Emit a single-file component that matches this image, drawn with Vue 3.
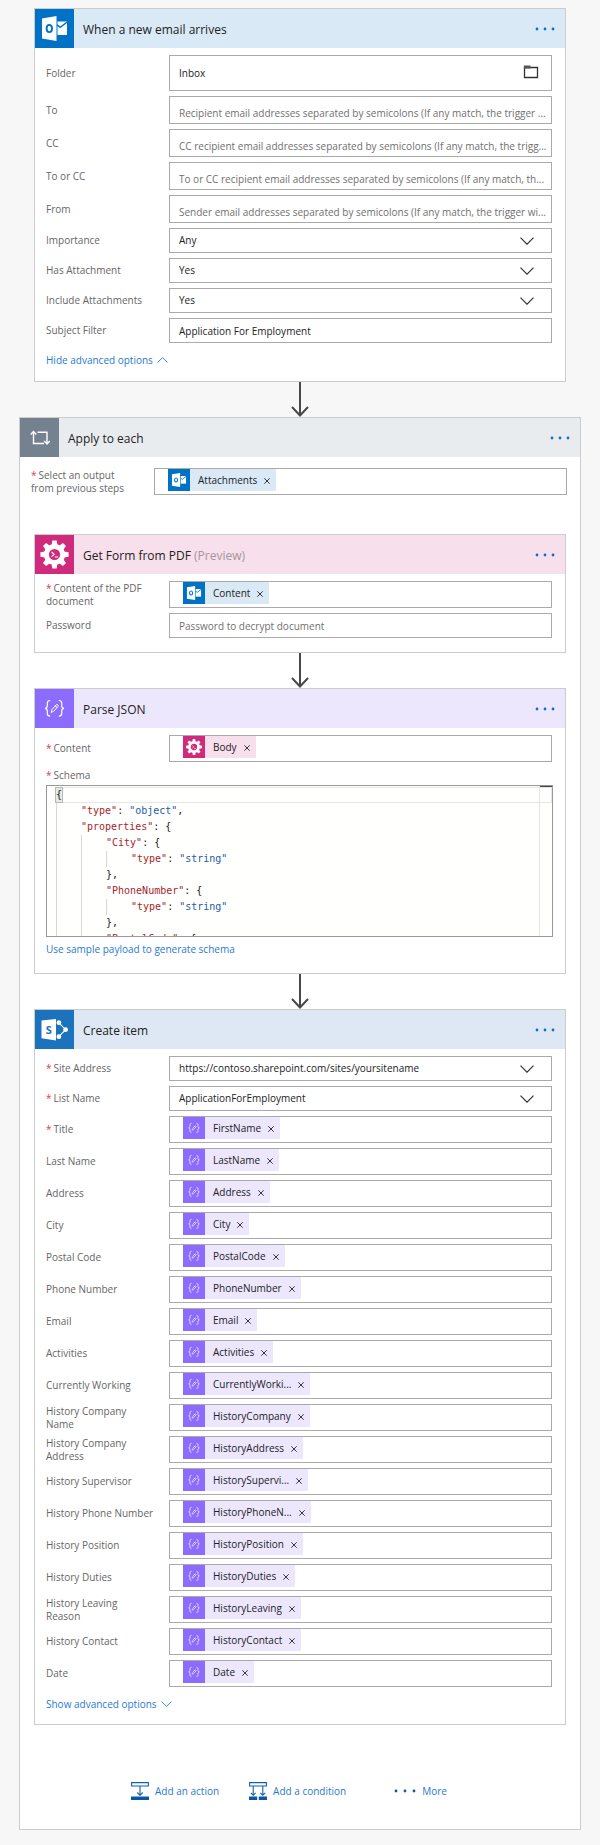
<script setup>
import { h } from 'vue'

const emailFilters = [
  { id: 'to', label: 'To', hint: 'Recipient email addresses separated by semicolons (If any match, the trigger ...' },
  { id: 'cc', label: 'CC', hint: 'CC recipient email addresses separated by semicolons (If any match, the trigg...' },
  { id: 'to-or-cc', label: 'To or CC', hint: 'To or CC recipient email addresses separated by semicolons (If any match, th...' },
  { id: 'from', label: 'From', hint: 'Sender email addresses separated by semicolons (If any match, the trigger wi...' },
]

const emailChoices = [
  { id: 'importance', label: 'Importance', value: 'Any' },
  { id: 'has-attachment', label: 'Has Attachment', value: 'Yes' },
  { id: 'include-attachments', label: 'Include Attachments', value: 'Yes' },
]

const listChoices = [
  { id: 'site', label: 'Site Address', value: 'https://contoso.sharepoint.com/sites/yoursitename' },
  { id: 'list', label: 'List Name', value: 'ApplicationForEmployment' },
]

const itemFields = [
  { label: 'Title', token: 'FirstName', required: true },
  { label: 'Last Name', token: 'LastName' },
  { label: 'Address', token: 'Address' },
  { label: 'City', token: 'City' },
  { label: 'Postal Code', token: 'PostalCode' },
  { label: 'Phone Number', token: 'PhoneNumber' },
  { label: 'Email', token: 'Email' },
  { label: 'Activities', token: 'Activities' },
  { label: 'Currently Working', token: 'CurrentlyWorki...' },
  { label: 'History Company\nName', token: 'HistoryCompany' },
  { label: 'History Company\nAddress', token: 'HistoryAddress' },
  { label: 'History Supervisor', token: 'HistorySupervi...' },
  { label: 'History Phone Number', token: 'HistoryPhoneN...' },
  { label: 'History Position', token: 'HistoryPosition' },
  { label: 'History Duties', token: 'HistoryDuties' },
  { label: 'History Leaving\nReason', token: 'HistoryLeaving' },
  { label: 'History Contact', token: 'HistoryContact' },
  { label: 'Date', token: 'Date' },
]

const schema = [
  { depth: 0, brace: '{' },
  { depth: 1, name: '"type"', text: '"object"', end: ',' },
  { depth: 1, name: '"properties"', end: '{' },
  { depth: 2, name: '"City"', end: '{' },
  { depth: 3, name: '"type"', text: '"string"' },
  { depth: 2, end: '},' },
  { depth: 2, name: '"PhoneNumber"', end: '{' },
  { depth: 3, name: '"type"', text: '"string"' },
  { depth: 2, end: '},' },
  { depth: 2, name: '"PostalCode"', end: '{' },
]

const teeth = [0, 45, 90, 135, 180, 225, 270, 315]

const art = {
  outlook: () => [
    h('path', { d: 'M7 9.5 21.5 7v25L7 29.5z', fill: '#fff' }),
    h('ellipse', { cx: 14.3, cy: 19.5, rx: 2.7, ry: 3.6, fill: 'none', stroke: '#0072c6', 'stroke-width': 1.9 }),
    h('path', { d: 'M22.5 12.5H32V26h-9.5z', fill: '#fff' }),
    h('path', { d: 'M22 15.8l3.2 2.6L32.3 13', fill: 'none', stroke: '#0072c6', 'stroke-width': 1.5 }),
  ],
  gear: () => [
    ...teeth.map((a) => h('path', { d: 'M16.6 10l.7-4.6h4.4l.7 4.6z', fill: '#fff', transform: `rotate(${a} 19.5 19.5)` })),
    h('circle', { cx: 19.5, cy: 19.5, r: 10.6, fill: '#fff' }),
    h('circle', { cx: 19.5, cy: 19.5, r: 5.6, fill: '#cf2a7b' }),
    h('path', { d: 'M16.6 17l2.6 2.3-2.6 2.3M19.8 22h3.4', fill: 'none', stroke: '#fff', 'stroke-width': 1.1 }),
  ],
  json: () => [
    h('path', {
      d: 'M15.2 11.5c-2.4 0-2.9.9-2.9 2.6v2.6c0 1.5-.6 2.4-2.3 2.6 1.7.2 2.3 1.1 2.3 2.6v2.6c0 1.7.5 2.6 2.9 2.6M23.8 11.5c2.4 0 2.9.9 2.9 2.6v2.6c0 1.5.6 2.4 2.3 2.6-1.7.2-2.3 1.1-2.3 2.6v2.6c0 1.7-.5 2.6-2.9 2.6',
      fill: 'none', stroke: '#fff', 'stroke-width': 1.2,
    }),
    h('path', { d: 'M16.2 23.4l.7-2.8 4.3-4.8c.9-.9 2.6.5 1.8 1.6l-4.3 4.9zM20.2 17l1.9 1.6', fill: 'none', stroke: '#fff', 'stroke-width': 1 }),
  ],
  sharepoint: () => [
    h('path', { d: 'M23.7 12.7 30.6 19.7 23.7 26.7', fill: 'none', stroke: '#fff', 'stroke-width': 1.1 }),
    h('circle', { cx: 23.9, cy: 12.7, r: 2.4, fill: '#fff' }),
    h('circle', { cx: 30.6, cy: 19.7, r: 2.4, fill: '#fff' }),
    h('circle', { cx: 23.9, cy: 26.7, r: 2.4, fill: '#fff' }),
    h('path', { d: 'M6.5 10.6 21 9v21.500L6.5 28.300z', fill: '#fff' }),
    h('text', { x: 13.8, y: 23.7, 'text-anchor': 'middle', 'font-size': 11, 'font-weight': 700, fill: '#1b72bd' }, 'S'),
  ],
  loop: () => [
    h('path', { d: 'M13.500 14v11.500h10.500M17.500 14.300H27V25', fill: 'none', stroke: '#fff', 'stroke-width': 1.4 }),
    h('path', { d: 'M10.700 16.500l2.800-3 2.800 3M24.200 23l2.800 3 2.800-3', fill: 'none', stroke: '#fff', 'stroke-width': 1.4 }),
  ],
}

const BrandIcon = (props) =>
  h('svg', { viewBox: '0 0 39 39', 'aria-hidden': 'true' }, art[props.name]())
BrandIcon.props = ['name']

const DownArrow = () =>
  h('svg', { viewBox: '0 0 18 35', width: 18, height: 35, 'aria-hidden': 'true' }, [
    h('path', { d: 'M9 0v33M1 25l8 8.500 8-8.500', fill: 'none', stroke: '#484848', 'stroke-width': 2 }),
  ])

const Chevron = (props) =>
  h('svg', { viewBox: '0 0 14 8', 'aria-hidden': 'true' }, [
    h('path', { d: props.up ? 'M.5 7.300 7 .8l6.500 6.500' : 'M.5.7 7 7.200 13.500.7', fill: 'none', stroke: 'currentColor', 'stroke-width': 1.2 }),
  ])
Chevron.props = { up: Boolean }

const Dots = (props) => {
  const step = props.wide ? 9 : 8
  const width = step * 2 + 4
  return h('svg', { viewBox: `0 0 ${width} 4`, width, height: 4, 'aria-hidden': 'true' },
    [0, 1, 2].map((n) => h('circle', { cx: 2 + n * step, cy: 2, r: 1.4, fill: 'currentColor' })))
}
Dots.props = { wide: Boolean }

const Token = (props) =>
  h('span', { class: ['token', `token-${props.kind}`] }, [
    h('span', { class: 'token-icon' }, [h(BrandIcon, { name: props.kind })]),
    h('span', { class: 'token-text' }, props.text),
    h('button', { type: 'button', class: 'token-remove', 'aria-label': `Remove ${props.text}` }, [
      h('svg', { viewBox: '0 0 6 6', width: 6, height: 6, 'aria-hidden': 'true' }, [
        h('path', { d: 'M.3.3l5.400 5.400M5.700.3l-5.400 5.400', stroke: '#222', 'stroke-width': 0.9 }),
      ]),
    ]),
  ])
Token.props = ['kind', 'text']
</script>

<template>
  <main class="flow">
    <section class="card trigger">
      <header class="head head-outlook">
        <span class="badge"><BrandIcon name="outlook" /></span>
        <h2>When a new email arrives</h2>
        <button type="button" class="menu" aria-label="Trigger menu"><Dots /></button>
      </header>
      <div class="body">
        <div class="row">
          <label for="folder">Folder</label>
          <div class="box tall">
            <input id="folder" type="text" value="Inbox" />
            <button type="button" class="browse" aria-label="Browse folders">
              <svg viewBox="0 0 16 14" width="16" height="14" aria-hidden="true">
                <path d="M1.500 2.500h13v10h-13z" fill="none" stroke="#333" stroke-width="1.300" />
                <path d="M.9.500h6.600v3H.9z" fill="#555" />
              </svg>
            </button>
          </div>
        </div>
        <div v-for="f in emailFilters" :key="f.id" class="row">
          <label :for="f.id">{{ f.label }}</label>
          <div class="box medium"><input :id="f.id" type="text" :placeholder="f.hint" /></div>
        </div>
        <div v-for="f in emailChoices" :key="f.id" class="row">
          <label :for="f.id">{{ f.label }}</label>
          <div class="box">
            <select :id="f.id"><option>{{ f.value }}</option></select>
            <Chevron class="caret" />
          </div>
        </div>
        <div class="row">
          <label for="subject">Subject Filter</label>
          <div class="box"><input id="subject" type="text" value="Application For Employment" /></div>
        </div>
        <a class="link more-options" href="#">Hide advanced options <Chevron up class="link-caret" /></a>
      </div>
    </section>

    <div class="connector"><DownArrow /></div>

    <section class="card scope">
      <header class="head head-loop">
        <span class="badge"><BrandIcon name="loop" /></span>
        <h2>Apply to each</h2>
        <button type="button" class="menu" aria-label="Loop menu"><Dots /></button>
      </header>
      <div class="body scope-input">
        <div class="row">
          <span id="select-output" class="label"><i class="req">*</i>Select an output<br />from previous steps</span>
          <div class="box tokens" role="group" aria-labelledby="select-output"><Token kind="outlook" text="Attachments" /></div>
        </div>
      </div>

      <div class="steps">
        <section class="card">
          <header class="head head-gear">
            <span class="badge"><BrandIcon name="gear" /></span>
            <h2>Get Form from PDF <span class="preview">(Preview)</span></h2>
            <button type="button" class="menu" aria-label="Get Form from PDF menu"><Dots /></button>
          </header>
          <div class="body">
            <div class="row">
              <span id="pdf-content" class="label"><i class="req">*</i>Content of the PDF<br />document</span>
              <div class="box tokens" role="group" aria-labelledby="pdf-content"><Token kind="outlook" text="Content" /></div>
            </div>
            <div class="row">
              <label for="password">Password</label>
              <div class="box"><input id="password" type="text" placeholder="Password to decrypt document" /></div>
            </div>
          </div>
        </section>

        <div class="connector"><DownArrow /></div>

        <section class="card">
          <header class="head head-json">
            <span class="badge"><BrandIcon name="json" /></span>
            <h2>Parse JSON</h2>
            <button type="button" class="menu" aria-label="Parse JSON menu"><Dots /></button>
          </header>
          <div class="body">
            <div class="row">
              <span id="json-content" class="label"><i class="req">*</i>Content</span>
              <div class="box tokens" role="group" aria-labelledby="json-content"><Token kind="gear" text="Body" /></div>
            </div>
            <div class="schema">
              <span id="schema-label" class="label"><i class="req">*</i>Schema</span>
              <div class="editor" role="textbox" tabindex="0" aria-multiline="true" aria-labelledby="schema-label">
                <div v-for="(line, i) in schema" :key="i" class="line" :class="{ current: i === 0 }">
                  <span v-for="d in line.depth" :key="d" class="indent"></span>
                  <span v-if="line.brace" class="brace">{{ line.brace }}</span>
                  <code v-else><span v-if="line.name" class="name">{{ line.name }}</span><template v-if="line.name">:&nbsp;</template><span v-if="line.text" class="text">{{ line.text }}</span>{{ line.end }}</code>
                </div>
              </div>
              <a class="link" href="#">Use sample payload to generate schema</a>
            </div>
          </div>
        </section>

        <div class="connector"><DownArrow /></div>

        <section class="card">
          <header class="head head-sharepoint">
            <span class="badge"><BrandIcon name="sharepoint" /></span>
            <h2>Create item</h2>
            <button type="button" class="menu" aria-label="Create item menu"><Dots /></button>
          </header>
          <div class="body">
            <div v-for="f in listChoices" :key="f.id" class="row">
              <label :for="f.id"><i class="req">*</i>{{ f.label }}</label>
              <div class="box">
                <select :id="f.id"><option>{{ f.value }}</option></select>
                <Chevron class="caret" />
              </div>
            </div>
            <div v-for="(f, i) in itemFields" :key="f.label" class="row">
              <span :id="`item-${i}`" class="label"><i v-if="f.required" class="req">*</i>{{ f.label }}</span>
              <div class="box tokens" role="group" :aria-labelledby="`item-${i}`"><Token kind="json" :text="f.token" /></div>
            </div>
            <a class="link more-options" href="#">Show advanced options <Chevron class="link-caret" /></a>
          </div>
        </section>
      </div>

      <nav class="actions">
        <button type="button" class="action">
          <svg viewBox="0 0 18 18" width="18" height="18" aria-hidden="true">
            <path d="M.6.600h16.800v3.400H.6zM9 4v9M6.200 10.500 9 13.300l2.800-2.800" fill="none" stroke="#1160b0" stroke-width="1.100" />
            <path d="M0 14.500h18V18H0z" fill="#0c56a8" />
          </svg>
          Add an action
        </button>
        <button type="button" class="action">
          <svg viewBox="0 0 18 18" width="18" height="18" aria-hidden="true">
            <path d="M.6.600h16.800v3.400H.6zM4.200 4v9M1.800 10.800l2.400 2.500 2.400-2.500M13.800 4v9M11.400 10.800l2.400 2.500 2.400-2.500" fill="none" stroke="#1160b0" stroke-width="1.100" />
            <path d="M0 14.500h8.200V18H0zM9.800 14.500H18V18H9.800z" fill="#0c56a8" />
          </svg>
          Add a condition
        </button>
        <button type="button" class="action action-more"><Dots wide class="more-dots" />More</button>
      </nav>
    </section>
  </main>
</template>

<style>
body {
  background: #f7f7f7;
}
</style>

<style scoped>
.flow {
  box-sizing: border-box;
  padding: 8px 19px 15px;
  background: #f7f7f7;
  color: #222;
  font: 10px/13px "Open Sans", "Noto Sans", sans-serif;
}
.flow :deep(*) {
  box-sizing: border-box;
}
.flow :deep(svg) {
  display: block;
  flex: none;
}
.card {
  border: 1px solid #ccc;
  background: #fff;
}
.trigger {
  margin: 0 15px;
}
.connector {
  display: flex;
  justify-content: center;
}
.steps {
  padding: 0 14px;
}
.head {
  display: flex;
  align-items: center;
  height: 39px;
  padding-right: 10px;
}
.badge {
  flex: none;
  width: 39px;
  height: 39px;
}
h2 {
  flex: 1;
  margin: 0 0 0 9px;
  padding-top: 2px;
  font-size: 12px;
  line-height: 18px;
  font-weight: 400;
}
.preview {
  color: #a5969e;
}
.menu {
  padding: 6px 0;
  border: 0;
  background: none;
  color: #0f6fd0;
}
.head-outlook { background: #d9e9f6; }
.head-outlook .badge { background: #0072c6; }
.head-loop { background: #e9ecef; }
.head-loop .badge { background: #748290; }
.head-gear { background: #f7dfeb; }
.head-gear .badge { background: #cf2a7b; }
.head-json { background: #ede7fe; }
.head-json .badge { background: #8c6cff; }
.head-sharepoint { background: #dde8f4; }
.head-sharepoint .badge { background: #1b72bd; }

.body {
  display: flex;
  flex-direction: column;
  gap: 5px;
  padding: 7px 13px 14px 11px;
}
.trigger .body {
  padding-bottom: 15px;
}
.scope-input {
  padding-top: 11px;
  padding-bottom: 39px;
}
.row {
  display: grid;
  grid-template-columns: 123px 1fr;
  align-items: center;
}
label,
.label {
  padding-right: 12px;
  color: #666;
  white-space: pre-line;
}
.req {
  margin-right: 2px;
  color: #e23b3b;
  font-style: normal;
}
.box {
  display: flex;
  align-items: center;
  min-width: 0;
  height: 25px;
  border: 1px solid #aaa;
  background: #fff;
}
.box.medium {
  height: 28px;
}
.box.tall {
  height: 36px;
}
.box.tokens {
  height: 27px;
  align-items: flex-start;
  padding-left: 13px;
}
input,
select {
  flex: 1;
  min-width: 0;
  width: 100%;
  height: 100%;
  margin: 0;
  padding: 0 4px 0 9px;
  border: 0;
  border-radius: 0;
  background: transparent;
  color: #222;
  font: inherit;
  appearance: none;
  text-overflow: ellipsis;
}
.medium input {
  padding-top: 5px;
}
input::placeholder {
  color: #707070;
  opacity: 1;
}
.box .caret {
  width: 14px;
  height: 8px;
  margin-right: 17px;
  color: #333;
}
.browse {
  margin-right: 12px;
  padding: 0 0 2px;
  border: 0;
  background: none;
}
.box :deep(.token) {
  display: flex;
  align-items: center;
  height: 22px;
  padding-right: 6px;
}
.box :deep(.token-icon) {
  width: 22px;
  height: 22px;
  margin-right: 8px;
}
.box :deep(.token-remove) {
  margin-left: 7px;
  padding: 2px 0 0;
  border: 0;
  background: none;
}
.box :deep(.token-outlook) { background: #d9e9f6; }
.box :deep(.token-outlook .token-icon) { background: #0072c6; }
.box :deep(.token-gear) { background: #f7dfeb; }
.box :deep(.token-gear .token-icon) { background: #cf2a7b; }
.box :deep(.token-json) { background: #ede7fe; }
.box :deep(.token-json .token-icon) { background: #8c6cff; }

.link {
  display: inline-flex;
  align-items: center;
  align-self: flex-start;
  gap: 4px;
  color: #1f7ad1;
  line-height: 16px;
  text-decoration: none;
}
.more-options {
  margin-top: 4px;
  margin-bottom: -2px;
}
.link-caret {
  width: 11px;
  height: 6px;
}
.schema {
  display: flex;
  flex-direction: column;
  margin-right: -1px;
  padding-bottom: 2px;
}
.schema .label {
  line-height: 16px;
}
.editor {
  height: 152px;
  margin: 2px 0 4px;
  padding: 1px 0 0 9px;
  overflow: hidden;
  border: 1px solid #999;
  background: linear-gradient(#444, #444) right top / 12px 2px no-repeat,
    linear-gradient(#e4e4e4, #e4e4e4) right 12px top / 1px 100% no-repeat, #fffffe;
  font: 10px/16px "DejaVu Sans Mono", monospace;
}
.line {
  display: flex;
  height: 16px;
  color: #222;
}
.line.current {
  border: 1px solid #e6e6e6;
  border-left: 0;
  line-height: 14px;
}
code {
  font: inherit;
}
.indent {
  flex: none;
  width: 25px;
  border-left: 1px solid #d8d8d8;
}
.brace {
  background: #e3ebe3;
  outline: 1px solid #b9b9b9;
}
.name { color: #a5262d; }
.text { color: #1f5ba6; }

.actions {
  display: flex;
  justify-content: center;
  gap: 30px;
  padding: 56px 22px 28px 0;
}
.action {
  display: flex;
  align-items: center;
  gap: 6px;
  height: 20px;
  padding: 0;
  border: 0;
  background: none;
  color: #1f7ad1;
  font: inherit;
}
.action-more {
  margin-left: 18px;
}
.more-dots {
  color: #0c56a8;
}
</style>
